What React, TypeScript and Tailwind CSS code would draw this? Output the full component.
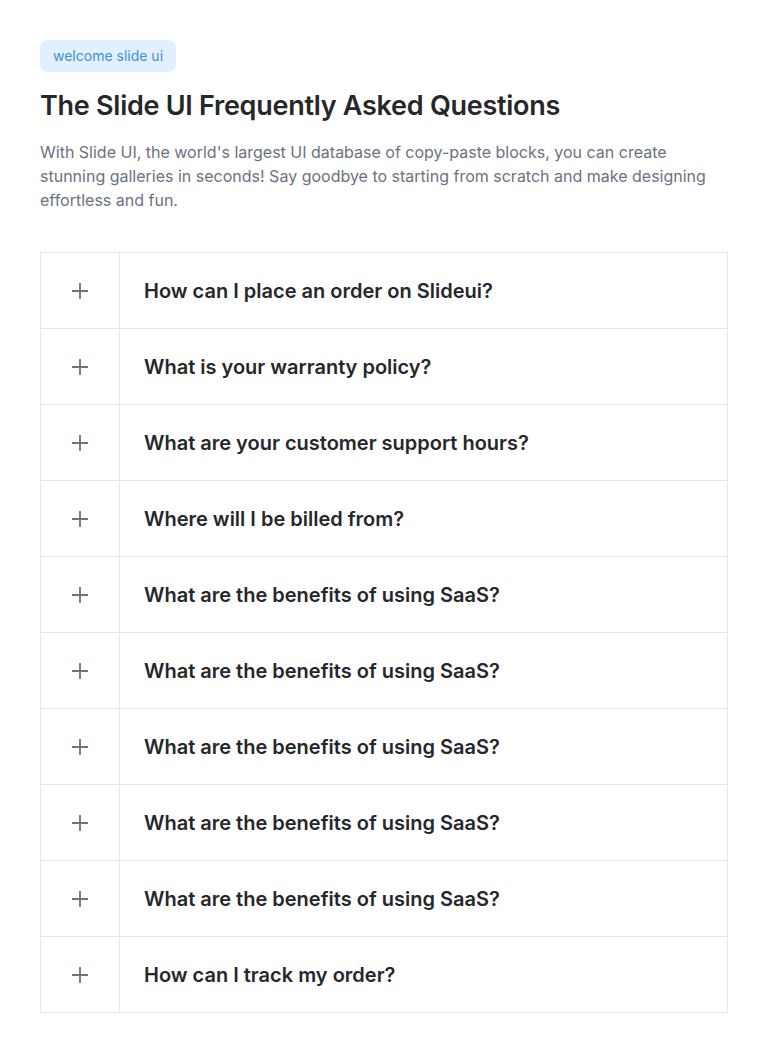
const questions = [
  "How can I place an order on Slideui?",
  "What is your warranty policy?",
  "What are your customer support hours?",
  "Where will I be billed from?",
  "What are the benefits of using SaaS?",
  "What are the benefits of using SaaS?",
  "What are the benefits of using SaaS?",
  "What are the benefits of using SaaS?",
  "What are the benefits of using SaaS?",
  "How can I track my order?",
]

function PlusIcon() {
  return (
    <svg width="18" height="18" viewBox="0 0 18 18" fill="none" stroke="#6b7280" strokeWidth="1.8">
      <path d="M9 1v16M1 9h16" />
    </svg>
  )
}

export default function App() {
  return (
    <div className="min-h-screen bg-white p-10 font-['Inter',sans-serif]">
      <span className="inline-flex h-8 items-center rounded-lg bg-[#e2f0fd] px-[13px] text-sm text-[#3f8fdf]">
        welcome slide ui
      </span>
      <h1 className="mt-4 text-[27px] leading-9 font-semibold tracking-[-0.01em] text-[#25272b]">
        The Slide UI Frequently Asked Questions
      </h1>
      <p className="mt-4 text-base leading-6 text-gray-500">
        With Slide UI, the world's largest UI database of copy-paste blocks, you can create stunning galleries in seconds! Say goodbye to starting from scratch and make designing effortless and fun.
      </p>

      <div className="mt-10 border-x border-t border-gray-200">
        {questions.map((q, i) => (
          <div key={i} className="flex h-[76px] items-stretch border-b border-gray-200">
            <div className="flex w-[79px] shrink-0 items-center justify-center border-r border-gray-200">
              <PlusIcon />
            </div>
            <div className="flex items-center pl-6 text-xl font-semibold text-[#25272b]">{q}</div>
          </div>
        ))}
      </div>
    </div>
  )
}
